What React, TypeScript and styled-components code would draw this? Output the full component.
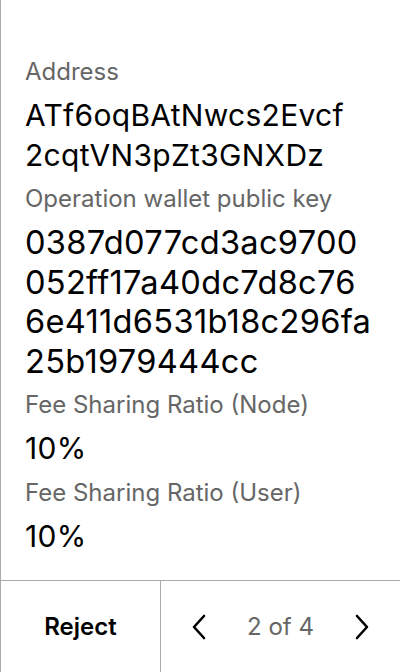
import React from "react";
import styled, { createGlobalStyle } from "styled-components";

const Global = createGlobalStyle`
  html, body { margin: 0; padding: 0; background: #fff; }
  body { font-family: Inter, "Noto Sans", sans-serif; }
  * { box-sizing: border-box; }
`;

const Screen = styled.div`
  width: 400px;
  height: 672px;
  display: flex;
  flex-direction: column;
  border-left: 1px solid #aaaaaa;
  background: #fff;
`;

const Content = styled.div`
  flex: 1;
  padding: 56px 24px 0 24px;
  display: flex;
  flex-direction: column;
`;

const Label = styled.div`
  font-size: 24px;
  line-height: 32px;
  color: #666666;
  margin-bottom: 8px;
`;

const Value = styled.div<{ $size: number }>`
  font-size: ${(p) => p.$size}px;
  line-height: 39.5px;
  letter-spacing: 0.3px;
  color: #000;
  margin-bottom: 8px;
`;

const Line = styled.span`
  display: block;
  white-space: nowrap;
`;

const Footer = styled.div`
  height: 92px;
  display: grid;
  grid-template-columns: 160px 1fr;
  border-top: 1px solid #aaaaaa;
`;

const RejectButton = styled.button`
  border: none;
  border-right: 1px solid #aaaaaa;
  background: transparent;
  font-family: Inter, "Noto Sans", sans-serif;
  font-size: 24px;
  font-weight: 600;
  color: #000;
  padding: 0;
`;

const Pager = styled.div`
  display: flex;
  align-items: center;
  justify-content: space-between;
  padding: 0 26px 0 26px;
`;

const Arrow = styled.button`
  border: none;
  background: transparent;
  padding: 0;
  width: 24px;
  height: 28px;
  display: flex;
  align-items: center;
  justify-content: center;
`;

const PageText = styled.span`
  font-size: 24px;
  color: #666666;
`;

const Chevron = ({ dir }: { dir: "left" | "right" }) => (
  <svg width="16" height="26" viewBox="0 0 16 26" fill="none">
    <path
      d={dir === "left" ? "M13 2 L3 13 L13 24" : "M3 2 L13 13 L3 24"}
      stroke="#000"
      strokeWidth="2.6"
      strokeLinecap="round"
      strokeLinejoin="round"
    />
  </svg>
);

const fields: { label: string; size: number; lines: string[] }[] = [
  { label: "Address", size: 30, lines: ["ATf6oqBAtNwcs2Evcf", "2cqtVN3pZt3GNXDz"] },
  {
    label: "Operation wallet public key",
    size: 32.6,
    lines: ["0387d077cd3ac9700", "052ff17a40dc7d8c76", "6e411d6531b18c296fa", "25b1979444cc"],
  },
  { label: "Fee Sharing Ratio (Node)", size: 30, lines: ["10%"] },
  { label: "Fee Sharing Ratio (User)", size: 30, lines: ["10%"] },
];

export default function App() {
  return (
    <>
      <Global />
      <Screen>
        <Content>
          {fields.map((f) => (
            <React.Fragment key={f.label}>
              <Label>{f.label}</Label>
              <Value $size={f.size}>
                {f.lines.map((l) => (
                  <Line key={l}>{l}</Line>
                ))}
              </Value>
            </React.Fragment>
          ))}
        </Content>
        <Footer>
          <RejectButton>Reject</RejectButton>
          <Pager>
            <Arrow aria-label="Previous">
              <Chevron dir="left" />
            </Arrow>
            <PageText>2 of 4</PageText>
            <Arrow aria-label="Next">
              <Chevron dir="right" />
            </Arrow>
          </Pager>
        </Footer>
      </Screen>
    </>
  );
}
